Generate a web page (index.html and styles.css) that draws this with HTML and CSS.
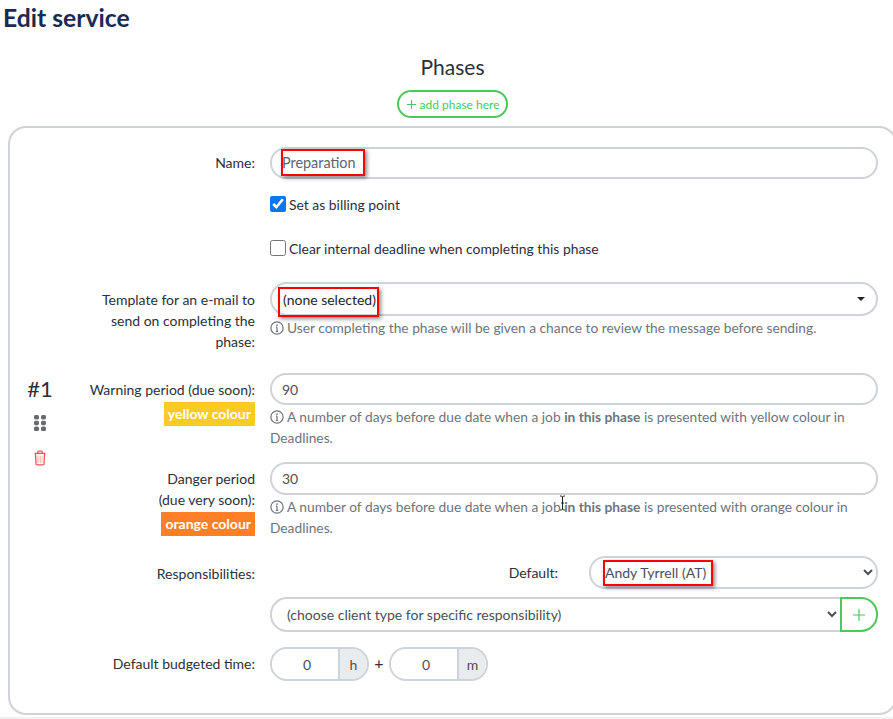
FILE: index.html
```html
<!DOCTYPE html>
<html lang="en">
<head>
<meta charset="utf-8">
<title>Edit service</title>
<link rel="stylesheet" href="styles.css">
</head>
<body>
<h1 class="page-title">Edit service</h1>
<div class="phases">
  <h2 class="phases-title">Phases</h2>
  <div class="add-wrap">
    <button class="add-phase" type="button"><svg class="add-icon" viewBox="0 0 12 12"><path d="M6 1v10M1 6h10"/></svg>add phase here</button>
  </div>
  <section class="card">
    <aside class="side">
      <div class="phase-no">#1</div>
      <svg class="grip" viewBox="0 0 12 16"><rect x="0" y="0" width="5" height="4.4" rx="1.6"/><rect x="7" y="0" width="5" height="4.4" rx="1.6"/><rect x="0" y="5.8" width="5" height="4.4" rx="1.6"/><rect x="7" y="5.8" width="5" height="4.4" rx="1.6"/><rect x="0" y="11.6" width="5" height="4.4" rx="1.6"/><rect x="7" y="11.6" width="5" height="4.4" rx="1.6"/></svg>
      <svg class="trash" viewBox="0 0 12 14"><path class="trash-lines" d="M3.6 5v6.5M5 5v6.5M6.4 5v6.5M7.8 5v6.5"/><path class="trash-body" d="M1.2 3h9.6M4 3V1.9c0-.5.4-.9.9-.9h2.2c.5 0 .9.4.9.9V3M2 3l.5 9c0 .6.5 1 1 1h5c.5 0 1-.4 1-1l.5-9"/></svg>
    </aside>
    <form class="form">
      <div class="row row-name">
        <label class="label label-name">Name:</label>
        <div class="control">
          <input class="text-input text-input-name" type="text" value="Preparation">
          <span class="mark mark-name"></span>
        </div>
      </div>
      <div class="row row-check-a">
        <span></span>
        <label class="check"><input type="checkbox" checked>Set as billing point</label>
      </div>
      <div class="row row-check-b">
        <span></span>
        <label class="check"><input type="checkbox">Clear internal deadline when completing this phase</label>
      </div>
      <div class="row row-template">
        <label class="label label-template">Template for an e-mail to send on completing the phase:</label>
        <div class="control">
          <button class="fake-select" type="button"><span>(none selected)</span><i class="caret"></i></button>
          <span class="mark mark-template"></span>
          <p class="help"><svg class="info" viewBox="0 0 16 16"><circle cx="8" cy="8" r="7"/><path d="M8 7v5M6.6 12h2.8M6.8 7H8"/><circle class="dot" cx="8" cy="4.6" r="1"/></svg>User completing the phase will be given a chance to review the message before sending.</p>
        </div>
      </div>
      <div class="row row-warning">
        <div class="label">
          <label>Warning period (due soon):</label>
          <span class="badge badge-yellow">yellow colour</span>
        </div>
        <div class="control">
          <input class="text-input" type="text" value="90">
          <p class="help"><svg class="info" viewBox="0 0 16 16"><circle cx="8" cy="8" r="7"/><path d="M8 7v5M6.6 12h2.8M6.8 7H8"/><circle class="dot" cx="8" cy="4.6" r="1"/></svg>A number of days before due date when a job <b>in this phase</b> is presented with yellow colour in Deadlines.</p>
        </div>
      </div>
      <div class="row row-danger">
        <div class="label">
          <label>Danger period<br>(due very soon):</label>
          <span class="badge badge-orange">orange colour</span>
        </div>
        <div class="control">
          <input class="text-input text-input-danger" type="text" value="30">
          <p class="help"><svg class="info" viewBox="0 0 16 16"><circle cx="8" cy="8" r="7"/><path d="M8 7v5M6.6 12h2.8M6.8 7H8"/><circle class="dot" cx="8" cy="4.6" r="1"/></svg>A number of days before due date when a job <b>in this phase</b> is presented with orange colour in Deadlines.</p>
          <svg class="ibeam" viewBox="0 0 7 16"><path d="M1 1h1.5l1 1 1-1H6M3.5 2v12M1 15h1.5l1-1 1 1H6M2 8h3"/></svg>
        </div>
      </div>
      <div class="row row-resp">
        <label class="label label-resp">Responsibilities:</label>
        <div class="control">
          <div class="default-line">
            <label class="default-label">Default:</label>
            <div class="default-select-wrap">
              <select class="select select-default"><option>Andy Tyrrell (AT)</option></select>
              <span class="mark mark-default"></span>
            </div>
          </div>
          <div class="client-line">
            <select class="select select-client"><option>(choose client type for specific responsibility)</option></select>
            <button class="plus-btn" type="button"><svg class="plus-icon" viewBox="0 0 12 12"><path d="M6 0v12M0 6h12"/></svg></button>
          </div>
        </div>
      </div>
      <div class="row row-time">
        <label class="label">Default budgeted time:</label>
        <div class="time-line">
          <div class="time-group"><input class="time-input" type="text" value="0"><span class="time-unit">h</span></div>
          <span class="time-plus">+</span>
          <div class="time-group"><input class="time-input" type="text" value="0"><span class="time-unit">m</span></div>
        </div>
      </div>
    </form>
  </section>
</div>
<div class="bottom-strip"></div>
</body>
</html>
```

FILE: styles.css
```css
* { box-sizing: border-box; }
html, body { height: 719px; overflow: hidden; }
body {
  margin: 0;
  background: #fff;
  font-family: "Lato", "Liberation Sans", sans-serif;
  font-size: 14px;
  line-height: 21px;
  color: #2b303b;
}
.page-title {
  margin: 0;
  padding: 3px 0 0 3px;
  height: 36px;
  font-size: 24.7px;
  line-height: 29px;
  font-weight: 700;
  color: #1a2a50;
}
.phases { margin: 0 -4px 0 8px; width: 889px; }
.phases-title {
  margin: 0;
  padding-top: 16px;
  height: 54px;
  font-size: 21px;
  line-height: 29px;
  font-weight: 400;
  text-align: center;
  color: #2b303b;
}
.add-wrap { display: flex; justify-content: center; height: 36px; }
.add-phase {
  display: flex;
  align-items: center;
  justify-content: center;
  width: 111px;
  height: 28px;
  padding: 0;
  background: #fff;
  border: 2px solid #4cc85c;
  border-radius: 14px;
  font: 400 12px "Lato", sans-serif;
  color: #4cc85c;
}
.add-icon { width: 11px; height: 11px; margin-right: 3px; fill: none; stroke: #4cc85c; stroke-width: 1.2; }
.card {
  display: flex;
  height: 589px;
  border: 2px solid #ced2d9;
  border-radius: 18px;
  padding: 19px 17px 0 0;
}
.side {
  width: 60px;
  flex: none;
  display: flex;
  flex-direction: column;
  align-items: center;
  justify-content: center;
  padding-bottom: 18px;
}
.phase-no { font-size: 22px; line-height: 26px; color: #2b303b; }
.grip { width: 12px; height: 16px; margin-top: 13px; fill: #666a70; }
.trash { width: 14px; height: 16px; margin-top: 19px; fill: none; }
.trash-body { stroke: #f4505a; stroke-width: 1.1; }
.trash-lines { stroke: #f9b6c6; stroke-width: .8; }
.form { flex: 1; min-width: 0; }
.row { display: grid; grid-template-columns: 185px 1fr; column-gap: 15px; }
.label { text-align: right; padding-top: 6px; display: block; }
.label-name { padding-top: 5px; }
.label-template { padding-top: 7px; }
.label-resp { padding-top: 7px; }
.control { position: relative; min-width: 0; }
.row-check-a { margin-top: 13px; }
.row-check-b { margin-top: 20px; }
.row-template { margin-top: 22px; }
.row-warning { margin-top: 21px; }
.row-danger { margin-top: 14px; }
.row-resp { margin-top: 18px; }
.row-time { margin-top: 15px; }
.text-input {
  display: block;
  width: 100%;
  height: 32px;
  padding: 0 10px;
  border: 2px solid #ced2d9;
  border-radius: 16px;
  background: #fff;
  font: 400 14px "Lato", sans-serif;
  color: #495057;
  outline: none;
}
.text-input-name { padding-bottom: 1px; font-size: 14.4px; color: #5b6470; }
.text-input-danger { height: 33px; }
.check { display: flex; align-items: center; height: 24px; color: #2b303b; font-size: 13.9px; }
.check input { width: 16px; height: 16px; margin: 0 3px 0 0; accent-color: #0b76ef; }
.fake-select {
  display: flex;
  align-items: center;
  justify-content: space-between;
  width: 100%;
  height: 34px;
  padding: 0 11px 0 11px;
  border: 2px solid #ced2d9;
  border-radius: 17px;
  background: #fff;
  font: 400 14px "Lato", sans-serif;
  color: #212529;
}
.caret { width: 0; height: 0; border-left: 4px solid transparent; border-right: 4px solid transparent; border-top: 4px solid #212529; }
.help { margin: 1px 0 0; color: #6c757d; font-size: 13.75px; line-height: 21px; }
.help b { font-weight: 700; }
.info { width: 14px; height: 14px; margin-right: 3px; vertical-align: -2px; fill: none; stroke: #6c757d; stroke-width: 1.4; }
.info .dot { fill: #6c757d; stroke: none; }
.badge {
  display: block;
  width: max-content;
  margin: 2px 0 0 auto;
  height: 24px;
  line-height: 24px;
  padding: 0 4px;
  color: #fff;
  font-weight: 700;
}
.badge-yellow { background: #fbcb25; }
.badge-orange { background: #fe7f26; }
.mark {
  position: absolute;
  border: 2px solid #f00;
  box-shadow: 2px 2px 4px rgba(0, 0, 0, .45);
  pointer-events: none;
}
.mark-name { left: 11px; top: 2px; width: 84px; height: 27px; }
.mark-template { left: 8px; top: 5px; width: 101px; height: 30px; }
.mark-default { left: 14px; top: 4px; width: 110px; height: 26px; }
.ibeam { position: absolute; left: 289px; top: 33px; width: 7px; height: 16px; fill: none; stroke: #222; stroke-width: 1; }
.default-line { display: flex; align-items: center; justify-content: flex-end; }
.default-label { margin-right: 31px; }
.default-select-wrap { position: relative; width: 289px; }
.select {
  display: block;
  height: 33px;
  padding: 0 0 0 10px;
  border: 2px solid #ced2d9;
  background: #fff;
  font: 400 14px "Lato", sans-serif;
  color: #495057;
  outline: none;
}
.select-default { width: 100%; border-radius: 16px; }
.client-line { display: flex; margin-top: 8px; }
.select-client { flex: 1; min-width: 0; height: 35px; padding-left: 11px; border-radius: 17px 0 0 17px; border-right: 0; }
.plus-btn {
  width: 38px;
  flex: none;
  height: 35px;
  padding: 0;
  display: flex;
  align-items: center;
  justify-content: center;
  background: #fff;
  border: 2px solid #4cc85c;
  border-radius: 0 17px 17px 0;
}
.plus-icon { width: 12px; height: 12px; fill: none; stroke: #4cc85c; stroke-width: 1.2; }
.time-line { display: flex; align-items: center; }
.time-group { display: flex; width: 99px; height: 34px; border: 2px solid #ced2d9; border-radius: 17px; overflow: hidden; }
.time-input { width: 66px; flex: none; border: 0; padding: 0 0 0 4px; text-align: center; outline: none; font: 400 14px "Lato", sans-serif; color: #495057; background: #fff; }
.time-unit { flex: 1; display: flex; align-items: center; justify-content: center; background: #e9ecef; border-left: 2px solid #ced2d9; color: #495057; }
.time-plus { width: 20px; text-align: center; font-size: 16px; margin-top: -3px; }
.bottom-strip { position: absolute; left: 0; right: 0; top: 717px; height: 2px; background: #f2f2f2; }
```
